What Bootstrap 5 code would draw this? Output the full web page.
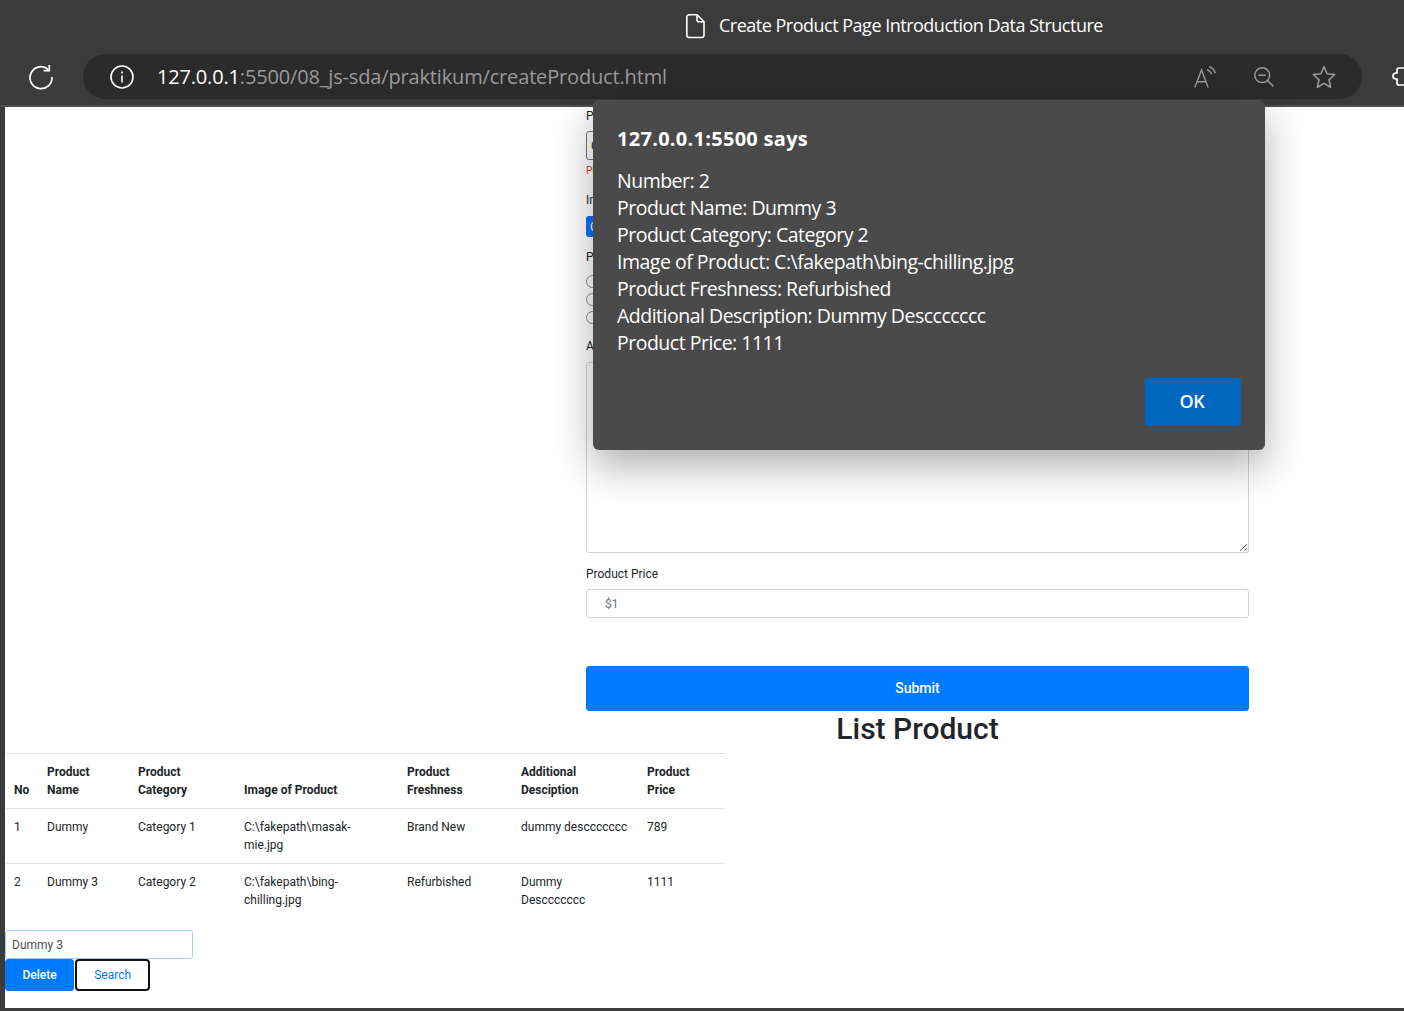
<!DOCTYPE html>
<html lang="en">
<head>
  <meta charset="UTF-8">
  <title>Create Product Page Introduction Data Structure</title>
  <link href="https://cdn.jsdelivr.net/npm/bootstrap@5.3.0/dist/css/bootstrap.min.css" rel="stylesheet">
  <style>
    html { font-size: 12px; }
    body {
      font-family: Roboto, "Liberation Sans", sans-serif;
      color: #212529;
      background-color: #3b3b3b;
      height: 1011px;
      overflow: hidden;
    }
    /* browser chrome */
    .chrome-bar { height: 107px; border-bottom: 2px solid #4f4f4f; font-family: "Open Sans", "Noto Sans", sans-serif; }
    .title-row { height: 54px; padding-left: 685px; padding-bottom: 3px; color: #fff; font-size: 18px; letter-spacing: -.5px; gap: 13px; }
    .tool-row { height: 45px; }
    .reload-btn { width: 83px; }
    .addr-pill { width: 1281px; background-color: #2b2b2b; border-radius: 23px; padding: 0 26px 0 27px; }
    .addr-text { font-size: 20px; letter-spacing: -.16px; color: #9a9a9a; margin-left: 23px; white-space: nowrap; }
    .addr-text b { font-weight: 400; color: #fff; }
    .addr-tools { gap: 38px; }
    .ext-clip { margin-left: 30px; }

    /* page */
    .page-area { background-color: #fff; margin-left: 5px; height: 901px; overflow: hidden; }
    .form-col { width: 663px; margin-left: 581px; }
    .form-label { margin-bottom: 6px; display: block; }
    .form-control, .form-select { font-size: 12px; border-color: #ced4da; border-radius: 3px; }
    .form-select { border-color: #777; padding-left: 4px; }
    .err-text { color: #dc3545; font-size: 10px; margin-top: 3px; line-height: 16px; margin-bottom: 12px; }
    .file-btn { background-color: #0d6efd; color: #fff; border: 0; border-radius: 3px; height: 21px; padding: 0 4px; font-size: 12px; margin-top: 1px; }
    .group-gap { margin-bottom: 11px; }
    .form-check { margin-bottom: 0; min-height: 18px; }
    .form-check-input { width: 13px; height: 13px; margin-top: 3px; border-color: #8a8a8a; }
    .fresh-end { margin-bottom: 11px; }
    .desc-area { height: 191px; margin-top: 7px; margin-bottom: 12px; }
    .price-input { padding-left: 18px; }
    .price-input::placeholder { color: #6c757d; }
    .submit-btn { background-color: #007bff; border-color: #007bff; border-radius: 3px; font-size: 14px; font-weight: 500; height: 45px; margin-top: 48px; }
    .list-title { width: 663px; font-size: 30px; font-weight: 500; line-height: 36px; margin: 0 0 6px 581px; }
    .product-table { width: 720px; table-layout: fixed; margin-bottom: 12px; border-top: 1px solid #dee2e6; }
    .product-table th, .product-table td { padding: 9px; border-bottom: 1px solid #dee2e6; vertical-align: top; }
    .product-table thead th { vertical-align: bottom; font-weight: 700; }
    .product-table tbody tr:last-child td { border-bottom: 0; }
    .c-no { width: 33px; } .c-name { width: 91px; } .c-cat { width: 106px; } .c-img { width: 163px; }
    .c-fresh { width: 114px; } .c-desc { width: 126px; } .c-price { width: 87px; }
    .search-input { width: 188px; height: 29px; padding: 4px 6px; border-color: #a9cdf5; color: #495057; }
    .del-btn { background-color: #007bff; border-color: #007bff; padding: 5px 16.5px; font-weight: 500; color: #fff; border-radius: 3px; }
    .find-btn { background-color: #fff; border: 2px solid #111; color: #007bff; padding: 5px 17px; border-radius: 4px; margin-left: 1px; }
    .act-row { height: 32px; }

    /* alert dialog */
    .alert-box {
      position: absolute; left: 593px; top: 100px; width: 672px; height: 350px;
      background-color: #4a4a4a; color: #fff; border-radius: 6px; padding: 24px;
      box-shadow: 0 16px 40px rgba(0,0,0,.32);
      font-family: "Open Sans", "Noto Sans", sans-serif;
    }
    .alert-head { font-size: 20px; font-weight: 700; line-height: 30px; letter-spacing: .28px; margin-bottom: 13px; }
    .alert-line { font-size: 19.5px; line-height: 27px; letter-spacing: -.5px; white-space: nowrap; }
    .ok-btn { position: absolute; right: 24px; bottom: 24px; width: 96px; height: 48px; padding: 0 2px 2px 0; background-color: #0067c0; border: 0; border-radius: 3px; color: #fff; font-size: 18px; font-weight: 600; letter-spacing: -.3px; }
  </style>
</head>
<body>
  <header class="chrome-bar">
    <div class="title-row d-flex align-items-center">
      <svg width="21" height="26" viewBox="0 0 21 26" fill="none" stroke="#fff" stroke-width="1.6"><path d="M4 1.8h8l7 7v13.5a2.2 2.2 0 0 1-2.2 2.2H4a2.2 2.2 0 0 1-2.2-2.2V4A2.2 2.2 0 0 1 4 1.8z"/><path d="M12 1.8v5a2 2 0 0 0 2 2h5"/></svg>
      <span>Create Product Page Introduction Data Structure</span>
    </div>
    <div class="tool-row d-flex">
      <div class="reload-btn d-flex align-items-center justify-content-center">
        <svg width="26" height="26" viewBox="0 0 26 26" fill="none" stroke="#fff" stroke-width="1.7"><path d="M20.5 5.6A11 11 0 1 0 24 13"/><path d="M21.3 1v5.6h-5.6"/></svg>
      </div>
      <div class="addr-pill d-flex align-items-center">
        <svg width="24" height="24" viewBox="0 0 24 24" fill="none" stroke="#fff" stroke-width="1.6"><circle cx="12" cy="12" r="11"/><path d="M12 10.5v7M12 6.5v2"/></svg>
        <span class="addr-text"><b>127.0.0.1</b>:5500/08_js-sda/praktikum/createProduct.html</span>
        <div class="addr-tools d-flex align-items-center ms-auto">
          <svg width="22" height="22" viewBox="0 0 22 22" fill="none" stroke="#9a9a9a" stroke-width="1.4"><path d="M.8 21.5 7.5 4l6.7 17.5M3 15.8h9"/><path d="M13 3.6c2.4.8 3.8 2.3 4.5 4.6M15 .6c3.3 1 5.3 3.1 6.3 6.6"/></svg>
          <svg width="20" height="20" viewBox="0 0 20 20" fill="none" stroke="#9a9a9a" stroke-width="1.5"><circle cx="8.2" cy="8.2" r="7.4"/><path d="M4.5 8.2h7.4M13.4 13.4 19.4 19.4"/></svg>
          <svg width="24" height="24" viewBox="0 0 25 24" fill="none" stroke="#9a9a9a" stroke-width="1.6" stroke-linejoin="round"><path d="M12.5 1.2 15.7 8.6 23.7 9.4 17.7 14.8 19.4 22.7 12.5 18.6 5.6 22.7 7.3 14.8 1.3 9.4 9.3 8.6z"/></svg>
        </div>
      </div>
      <div class="ext-clip d-flex align-items-center">
        <svg width="12" height="24" viewBox="0 0 12 24" fill="none" stroke="#fff" stroke-width="1.7"><path d="M12 3H7a2 2 0 0 0-2 2v3H4a3 3 0 0 0 0 6h1v4a2 2 0 0 0 2 2h5"/></svg>
      </div>
    </div>
  </header>

  <main class="page-area">
    <form class="form-col">
      <label class="form-label">Product Category</label>
      <select class="form-select"><option>Category 2</option></select>
      <div class="err-text">Please select a category</div>

      <label class="form-label">Image of Product</label>
      <button type="button" class="file-btn">Choose File</button>
      <div class="group-gap"></div>

      <label class="form-label">Product Freshness</label>
      <div class="form-check"><input class="form-check-input" type="radio" name="fresh"><label class="form-check-label">Brand New</label></div>
      <div class="form-check"><input class="form-check-input" type="radio" name="fresh"><label class="form-check-label">Second Hand</label></div>
      <div class="form-check fresh-end"><input class="form-check-input" type="radio" name="fresh"><label class="form-check-label">Refurbished</label></div>

      <label class="form-label">Additional Description</label>
      <textarea class="form-control desc-area"></textarea>

      <label class="form-label">Product Price</label>
      <input type="text" class="form-control price-input" placeholder="$1">

      <button type="button" class="btn btn-primary w-100 submit-btn">Submit</button>
    </form>
    <h2 class="list-title text-center">List Product</h2>

    <table class="table product-table">
      <colgroup>
        <col class="c-no"><col class="c-name"><col class="c-cat"><col class="c-img"><col class="c-fresh"><col class="c-desc"><col class="c-price">
      </colgroup>
      <thead>
        <tr><th>No</th><th>Product Name</th><th>Product Category</th><th>Image of Product</th><th>Product Freshness</th><th>Additional Desciption</th><th>Product Price</th></tr>
      </thead>
      <tbody>
        <tr><td>1</td><td>Dummy</td><td>Category 1</td><td>C:\fakepath\masak-mie.jpg</td><td>Brand New</td><td>dummy desccccccc</td><td>789</td></tr>
        <tr><td>2</td><td>Dummy 3</td><td>Category 2</td><td>C:\fakepath\bing-chilling.jpg</td><td>Refurbished</td><td>Dummy Desccccccc</td><td>1111</td></tr>
      </tbody>
    </table>

    <input type="text" class="form-control search-input" value="Dummy 3">
    <div class="act-row d-flex">
      <button type="button" class="btn del-btn">Delete</button>
      <button type="button" class="btn find-btn">Search</button>
    </div>
  </main>

  <div class="alert-box">
    <div class="alert-head">127.0.0.1:5500 says</div>
    <div class="alert-line">Number: 2</div>
    <div class="alert-line">Product Name: Dummy 3</div>
    <div class="alert-line">Product Category: Category 2</div>
    <div class="alert-line">Image of Product: C:\fakepath\bing-chilling.jpg</div>
    <div class="alert-line">Product Freshness: Refurbished</div>
    <div class="alert-line">Additional Description: Dummy Desccccccc</div>
    <div class="alert-line">Product Price: 1111</div>
    <button type="button" class="ok-btn">OK</button>
  </div>
</body>
</html>
